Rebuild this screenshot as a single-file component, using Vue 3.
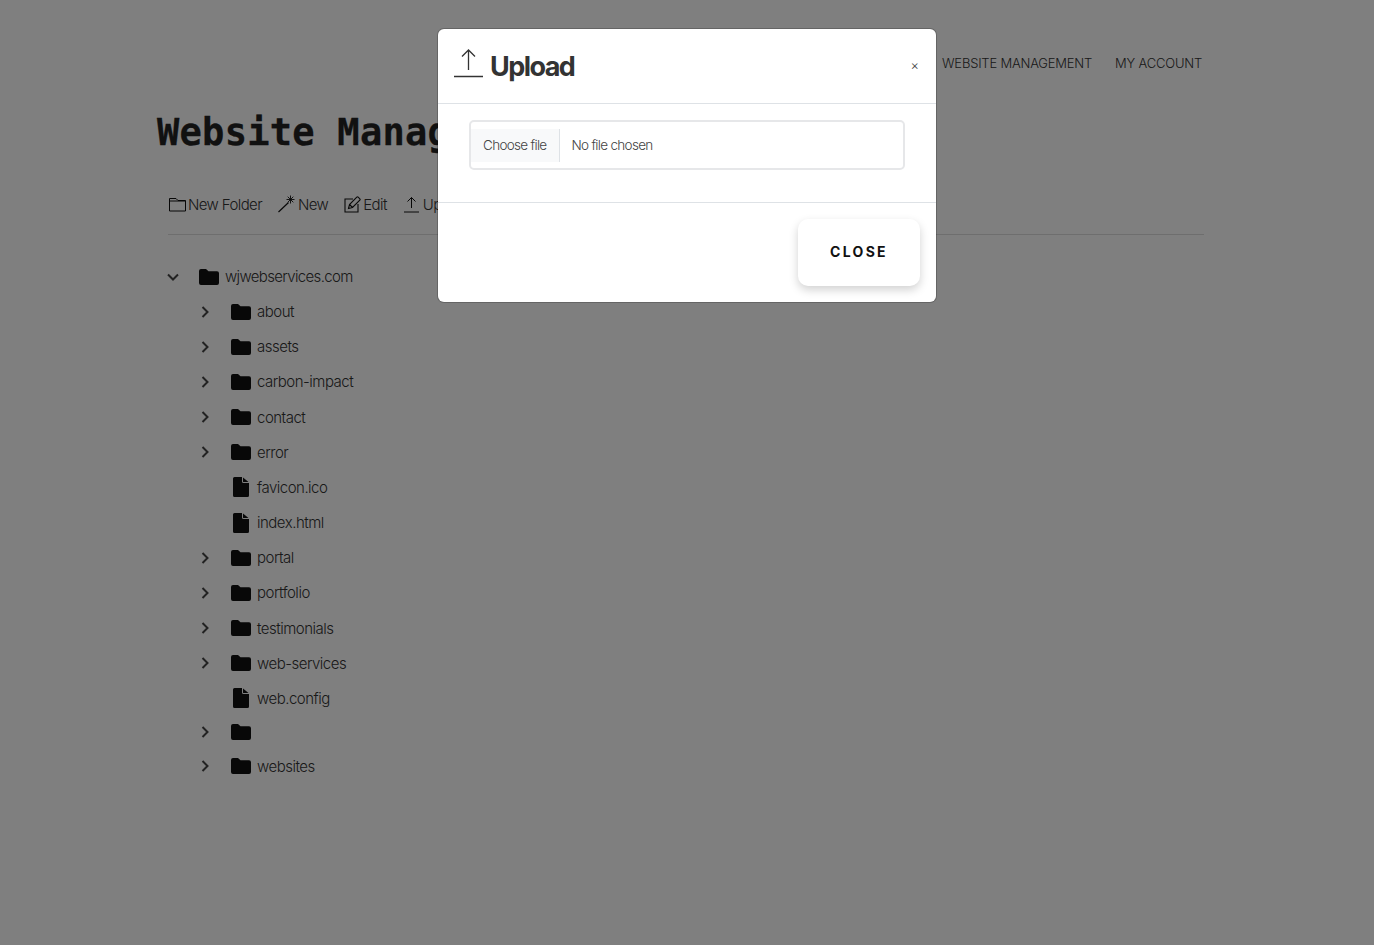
<script setup>
const rows = [
  { name: 'about', type: 'folder' },
  { name: 'assets', type: 'folder' },
  { name: 'carbon-impact', type: 'folder' },
  { name: 'contact', type: 'folder' },
  { name: 'error', type: 'folder' },
  { name: 'favicon.ico', type: 'file' },
  { name: 'index.html', type: 'file' },
  { name: 'portal', type: 'folder' },
  { name: 'portfolio', type: 'folder' },
  { name: 'testimonials', type: 'folder' },
  { name: 'web-services', type: 'folder' },
  { name: 'web.config', type: 'file' },
  { name: '', type: 'folder' },
  { name: 'websites', type: 'folder' }
]
</script>

<template>
  <div class="page">
    <nav class="nav">
      <a>WEBSITE MANAGEMENT</a>
      <a>MY ACCOUNT</a>
    </nav>
    <h1 class="title">Website Management</h1>
    <div class="toolbar">
      <span class="tool">
        <svg class="ticon first" width="17" height="16" viewBox="0 0 17 16" fill="none" stroke="currentColor" stroke-width="1"><path d="M.5 2.500h6.500l2 2h7.500v10.500H.5zM.5 5h16"/></svg>New Folder
      </span>
      <span class="tool">
        <svg class="ticon wand" width="18" height="18" viewBox="0 0 18 18" fill="none" stroke="currentColor" stroke-width="1"><path d="M.5 17 10.500 7.500" stroke-width="1.200"/><path d="M12.500 .5v8M8.500 4.500h8M9.700 1.700l5.600 5.600M15.300 1.700l-5.600 5.600" stroke-width=".9"/></svg>New
      </span>
      <span class="tool">
        <svg class="ticon wand" width="17" height="17" viewBox="0 0 17 17" fill="none" stroke="currentColor" stroke-width="1.100"><path d="M9 3H1v13h13V8"/><path d="M4.500 12.500l1-4L12.800 1.200a1 1 0 0 1 1.400 0l1.600 1.600a1 1 0 0 1 0 1.400L8.500 11.500zM5.500 8.500l3 3"/></svg>Edit
      </span>
      <span class="tool">
        <svg class="ticon" width="17" height="17" viewBox="0 0 17 17" fill="none" stroke="currentColor" stroke-width="1"><path d="M8.500 12V1.500M4.500 5.500l4-4 4 4M1 16h15"/></svg>Upload
      </span>
    </div>
    <div class="rule"></div>
    <ul class="tree">
      <li class="row root">
        <svg class="chev" width="14" height="14" viewBox="0 0 14 14" fill="none" stroke="currentColor" stroke-width="2"><path d="M2 4.500l5 5 5-5"/></svg>
        <svg class="folder" width="20" height="16" viewBox="0 0 20 16" fill="currentColor"><path d="M0 2a2 2 0 0 1 2-2h5l2.500 2.200H18a2 2 0 0 1 2 2V14a2 2 0 0 1-2 2H2a2 2 0 0 1-2-2z"/></svg>
        <span class="label">wjwebservices.com</span>
      </li>
      <li v-for="r in rows" :key="r.name" class="row child" :class="{ empty: !r.name }">
        <svg v-if="r.type === 'folder'" class="chev" width="14" height="14" viewBox="0 0 14 14" fill="none" stroke="currentColor" stroke-width="2"><path d="M4.500 2l5 5-5 5"/></svg>
        <span v-else class="chev"></span>
        <svg v-if="r.type === 'folder'" class="folder" width="20" height="16" viewBox="0 0 20 16" fill="currentColor"><path d="M0 2a2 2 0 0 1 2-2h5l2.500 2.200H18a2 2 0 0 1 2 2V14a2 2 0 0 1-2 2H2a2 2 0 0 1-2-2z"/></svg>
        <svg v-else class="file" width="20" height="20" viewBox="0 0 20 20" fill="currentColor"><path d="M2 1.500A1.500 1.500 0 0 1 3.500 0H11v4.500A1.500 1.500 0 0 0 12.500 6H18v12.500a1.500 1.500 0 0 1-1.500 1.500h-13A1.500 1.500 0 0 1 2 18.500zM12 .5 17.500 5h-5a.5.5 0 0 1-.5-.5z"/></svg>
        <span class="label">{{ r.name }}</span>
      </li>
    </ul>

    <div class="overlay">
      <div class="modal">
        <header class="mhead">
          <svg class="micon" width="30" height="30" viewBox="0 0 30 30" fill="none" stroke="#333" stroke-width="1.300"><path d="M14.500 22V2M8 8.500l6.500-6.500L21 8.500"/><path d="M0 28.500h29" stroke-width="1.500"/></svg>
          <h2 class="mtitle">Upload</h2>
          <span class="x">×</span>
        </header>
        <div class="mbody">
          <div class="fileinput">
            <span class="choose">Choose file</span>
            <span class="nofile">No file chosen</span>
          </div>
        </div>
        <footer class="mfoot">
          <button class="closebtn">CLOSE</button>
        </footer>
      </div>
    </div>
  </div>
</template>

<style>
html, body { margin: 0; background: #fff; }
</style>

<style scoped>
.page {
  position: relative;
  height: 945px;
  overflow: hidden;
  box-sizing: border-box;
  padding: 54px 170px 0 168px;
  font-family: Inter, "Noto Sans", sans-serif;
  font-weight: 300;
  color: #212529;
}
.nav {
  display: flex;
  justify-content: flex-end;
  gap: 23px;
  padding-right: 2px;
  font-size: 13px;
  line-height: 18px;
  letter-spacing: -.2px;
  color: #333;
}
.title {
  margin: 38px 0 0 -11px;
  font-family: "DejaVu Sans Mono", monospace;
  font-weight: 700;
  font-size: 37px;
  line-height: 46px;
  letter-spacing: .27px;
  -webkit-text-stroke: .3px #222;
  color: #222;
  white-space: nowrap;
}
.toolbar {
  display: flex;
  gap: 16px;
  margin-top: 38px;
  font-size: 15px;
  line-height: 22px;
}
.tool { display: flex; align-items: center; letter-spacing: -.6px; color: #333; }
.ticon { margin-right: 3px; flex: none; color: #111; position: relative; top: -1px; }
.first { margin-left: 1px; margin-right: 2px; }
.wand { margin-right: 2px; }
.rule { height: 1px; margin-top: 18px; background: #ddd; }
.tree { list-style: none; margin: 23.93px 0 0; padding: 0; font-size: 15px; }
.row { display: flex; align-items: center; height: 35.17px; letter-spacing: -.5px; color: #333; }
.root { margin-left: -2px; letter-spacing: -.65px; }
.child { padding-left: 30px; }
.empty { height: 32.5px; }
.chev { width: 14px; height: 14px; flex: none; color: #444; margin-right: 19px; }
.folder { flex: none; color: #111; }
.file { flex: none; color: #111; }
.label { margin-left: 6px; }
.overlay {
  position: absolute;
  inset: 0;
  background: rgba(0, 0, 0, .5);
}
.modal {
  position: absolute;
  left: 438px;
  top: 29px;
  width: 498px;
  height: 273px;
  background: #fff;
  border-radius: 6px;
  box-shadow: 0 0 0 1px rgba(0, 0, 0, .2);
  display: flex;
  flex-direction: column;
}
.mhead {
  display: flex;
  align-items: center;
  height: 74px;
  box-sizing: content-box;
  border-bottom: 1px solid #dee2e6;
  padding: 0 16px;
}
.micon { flex: none; margin-right: 6px; position: relative; top: -3px; }
.mtitle {
  margin: 0;
  font-size: 27px;
  font-weight: 700;
  letter-spacing: -1.55px;
  color: #333;
}
.x { margin-left: auto; font-size: 13px; color: #444; padding-right: 1px; position: relative; top: -1px; }
.mbody { height: 99px; padding: 16px 31px 0; box-sizing: border-box; border-bottom: 1px solid #dee2e6; }
.fileinput {
  display: flex;
  align-items: center;
  height: 50px;
  box-sizing: border-box;
  border: 2px solid #e6e7e9;
  border-radius: 5px;
  font-size: 13.5px;
  letter-spacing: -.7px;
  color: #444;
}
.choose {
  display: flex;
  align-items: center;
  height: 33px;
  padding: 0 13px 0 12px;
  background: #f8f9fa;
  border-right: 1px solid #dee2e6;
  margin-right: 11px;
}
.mfoot { flex: 1; display: flex; justify-content: flex-end; align-items: flex-start; padding: 16px 16px 0; }
.closebtn {
  width: 122px;
  height: 67px;
  padding: 0 0 2px;
  border: 0;
  border-radius: 10px;
  background: #fff;
  box-shadow: 0 4px 10px rgba(0, 0, 0, .18);
  font-family: Inter, sans-serif;
  font-weight: 700;
  font-size: 14px;
  letter-spacing: 2.3px;
  color: #111;
}
</style>
